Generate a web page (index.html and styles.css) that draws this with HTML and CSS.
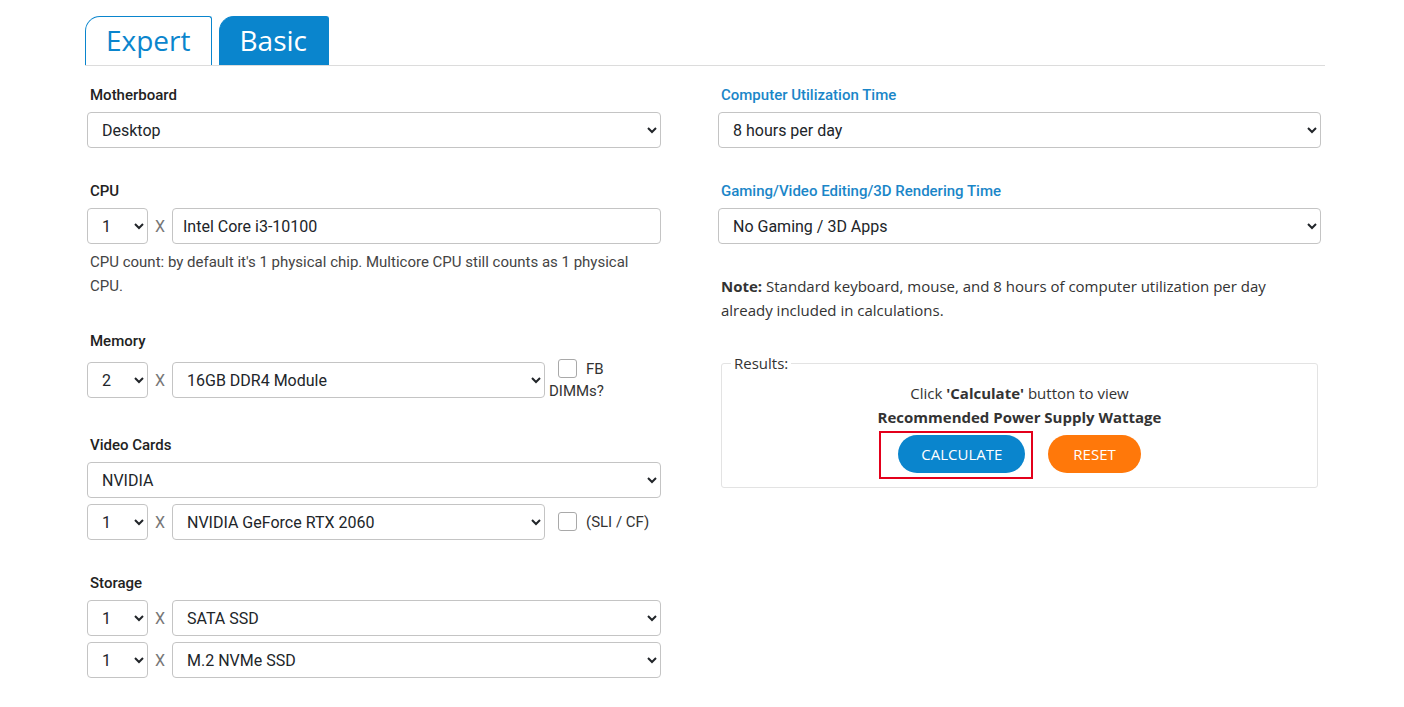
FILE: index.html
```html
<!DOCTYPE html>
<html lang="en">
<head>
  <meta charset="UTF-8">
  <title>Power Supply Calculator</title>
  <link rel="stylesheet" href="styles.css">
</head>
<body>

  <div class="calc">
    <div class="tabs">
      <a class="tab" href="#">Expert</a>
      <a class="tab active" href="#">Basic</a>
    </div>

    <div class="form-grid">
      <div class="col">
        <div class="group">
          <label class="field-label">Motherboard</label>
          <select class="full"><option>Desktop</option></select>
        </div>

        <div class="group">
          <label class="field-label">CPU</label>
          <div class="row">
            <select class="count"><option>1</option></select>
            <span class="times">X</span>
            <input class="item" type="text" value="Intel Core i3-10100">
          </div>
          <p class="help">CPU count: by default it's 1 physical chip. Multicore CPU still counts as 1 physical CPU.</p>
        </div>

        <div class="group">
          <label class="field-label">Memory</label>
          <div class="row">
            <select class="count"><option>2</option></select>
            <span class="times">X</span>
            <select class="item"><option>16GB DDR4 Module</option></select>
            <label class="check narrow"><input type="checkbox">FB DIMMs?</label>
          </div>
        </div>

        <div class="group">
          <label class="field-label">Video Cards</label>
          <select class="full"><option>NVIDIA</option></select>
          <div class="row">
            <select class="count"><option>1</option></select>
            <span class="times">X</span>
            <select class="item"><option>NVIDIA GeForce RTX 2060</option></select>
            <label class="check"><input type="checkbox">(SLI / CF)</label>
          </div>
        </div>

        <div class="group">
          <label class="field-label">Storage</label>
          <div class="row">
            <select class="count"><option>1</option></select>
            <span class="times">X</span>
            <select class="item wide"><option>SATA SSD</option></select>
          </div>
          <div class="row">
            <select class="count"><option>1</option></select>
            <span class="times">X</span>
            <select class="item wide"><option>M.2 NVMe SSD</option></select>
          </div>
        </div>
      </div>

      <div class="col">
        <div class="group">
          <label class="field-label blue">Computer Utilization Time</label>
          <select class="full"><option>8 hours per day</option></select>
        </div>

        <div class="group">
          <label class="field-label blue">Gaming/Video Editing/3D Rendering Time</label>
          <select class="full"><option>No Gaming / 3D Apps</option></select>
        </div>

        <p class="note"><b>Note:</b> Standard keyboard, mouse, and 8 hours of computer utilization per day already included in calculations.</p>

        <fieldset class="results">
          <legend>Results:</legend>
          <p>Click <b>'Calculate'</b> button to view<br><b>Recommended Power Supply Wattage</b></p>
          <div class="buttons">
            <span class="marked"><button class="btn calc-btn">Calculate</button></span>
            <button class="btn reset-btn">Reset</button>
          </div>
        </fieldset>
      </div>
    </div>
  </div>

</body>
</html>
```

FILE: styles.css
```css
body {
  margin: 0;
  padding: 0;
  font-family: Roboto, Arial, sans-serif;
  background-color: #fff;
  color: #222;
}

.calc {
  width: 1240px;
  margin-left: 85px;
  padding-top: 16px;
}

.tabs {
  display: flex;
  gap: 7px;
  border-bottom: 1px solid #dcdcdc;
}

.tab {
  font-family: "Open Sans", Arial, sans-serif;
  font-size: 28px;
  line-height: 46px;
  padding: 0 20px 2px;
  color: #0a85cd;
  text-decoration: none;
  border: 1px solid #0a85cd;
  border-bottom: none;
  border-radius: 15px 3px 0 0;
}

.tab.active {
  background-color: #0a85cd;
  color: #fff;
  padding: 0 21px 2px 20px;
}

.form-grid {
  display: grid;
  grid-template-columns: 574px 603px;
  column-gap: 57px;
  padding: 18px 4px 0 2px;
}

.group {
  margin-bottom: 32px;
}

.field-label {
  display: block;
  font-size: 15px;
  font-weight: 500;
  line-height: 22px;
  padding-left: 3px;
  margin-bottom: 6px;
  color: #222;
}

.field-label.blue {
  color: #1a86c8;
}

select,
input[type="text"] {
  font-family: Roboto, Arial, sans-serif;
  font-size: 16px;
  color: #212529;
  height: 36px;
  border: 1px solid #c4c4c4;
  border-radius: 4px;
  background-color: #fff;
  box-sizing: border-box;
}

select {
  padding: 0 8px 0 10px;
}

input[type="text"] {
  padding: 0 10px;
}

select.full {
  display: block;
  width: 100%;
}

.row {
  display: flex;
  align-items: center;
}

.full + .row,
.row + .row {
  margin-top: 6px;
}

.count {
  width: 61px;
  flex: none;
}

.times {
  width: 24px;
  text-align: center;
  color: #777;
  font-size: 16px;
}

.item {
  flex: 1;
  min-width: 0;
}

.check {
  flex: 0 0 116px;
  box-sizing: border-box;
  padding-left: 4px;
  font-size: 15px;
  line-height: 22px;
  color: #333;
}

.check.narrow {
  padding-right: 50px;
}

.check input {
  appearance: none;
  width: 19px;
  height: 19px;
  border: 1px solid #a9a9a9;
  border-radius: 3px;
  background: #fff;
  margin: 0 9px 0 9px;
  vertical-align: -4px;
}

.help {
  margin: 6px 0 0 3px;
  font-size: 15px;
  line-height: 24px;
  color: #444;
}

.note {
  font-family: "Open Sans", Arial, sans-serif;
  font-size: 15px;
  line-height: 24px;
  color: #333;
  margin: -2px 0 0 3px;
  max-width: 570px;
}

.note b {
  font-weight: 700;
}

.results {
  font-family: "Open Sans", Arial, sans-serif;
  font-size: 15px;
  color: #333;
  margin: 31px 3px 0;
  padding: 0 9px 14px;
  border: 1px solid #e3e3e3;
  border-radius: 3px;
}

.results legend {
  padding: 0 3px;
  line-height: 20px;
}

.results p {
  text-align: center;
  line-height: 24px;
  margin: 8px 0 6px;
}

.buttons {
  display: flex;
  justify-content: center;
  gap: 23px;
}

.marked {
  position: relative;
  display: inline-block;
}

.marked::after {
  content: "";
  position: absolute;
  top: -4px;
  left: -19px;
  right: -8px;
  bottom: -6px;
  border: 2px solid #e3001b;
}

.btn {
  font-family: "Open Sans", Arial, sans-serif;
  font-size: 15px;
  text-transform: uppercase;
  color: #fff;
  height: 38px;
  padding: 0 22px;
  border: none;
  border-radius: 19px;
  cursor: pointer;
}

.calc-btn {
  background-color: #0a85cd;
  display: block;
  padding: 0 23px;
}

.reset-btn {
  background-color: #ff780a;
  padding: 0 25px;
}
```
